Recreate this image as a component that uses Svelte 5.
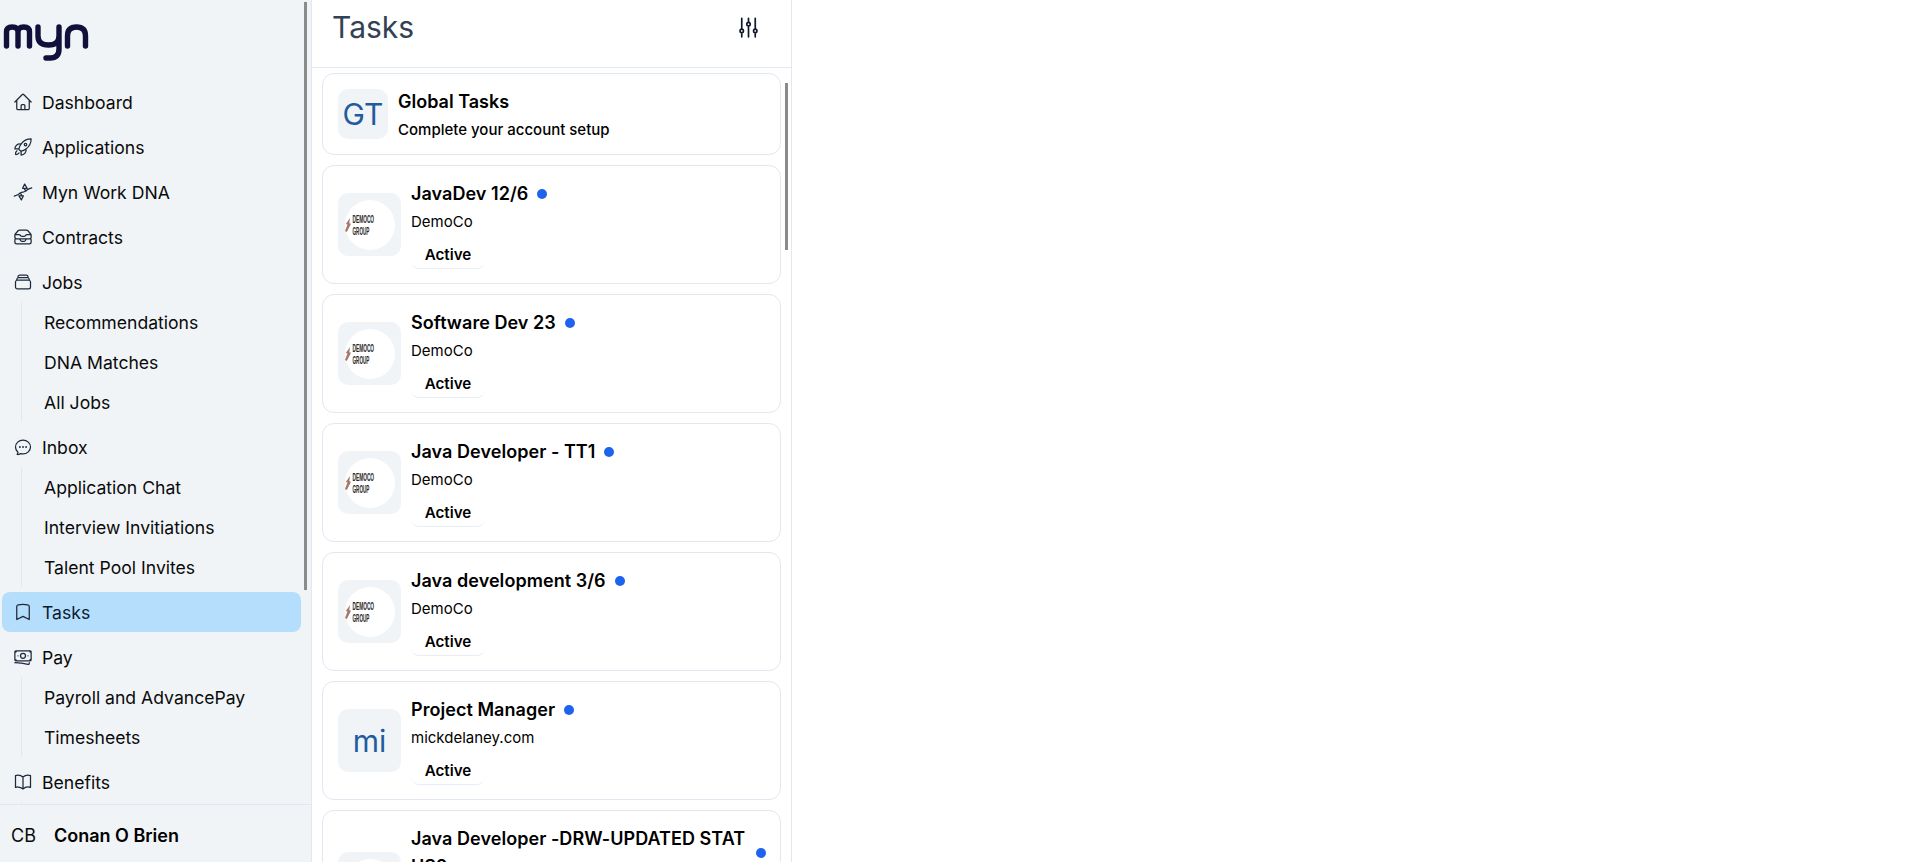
<script>
  const icons = {
    home: "m2.25 12 8.954-8.955c.44-.439 1.152-.439 1.591 0L21.75 12M4.5 9.75v10.125c0 .621.504 1.125 1.125 1.125H9.75v-4.875c0-.621.504-1.125 1.125-1.125h2.25c.621 0 1.125.504 1.125 1.125V21h4.125c.621 0 1.125-.504 1.125-1.125V9.75M8.25 21h8.25",
    rocket: "M15.59 14.37a6 6 0 0 1-5.84 7.38v-4.8m5.84-2.58a14.98 14.98 0 0 0 6.16-12.12A14.98 14.98 0 0 0 9.631 8.41m5.96 5.96a14.926 14.926 0 0 1-5.841 2.58m-.119-8.54a6 6 0 0 0-7.381 5.84h4.8m2.581-5.84a14.927 14.927 0 0 0-2.58 5.84m2.699 2.7c-.103.021-.207.041-.311.06a15.09 15.09 0 0 1-2.448-2.448 14.9 14.9 0 0 1 .06-.312m-2.24 2.39a4.493 4.493 0 0 0-1.757 4.306 4.493 4.493 0 0 0 4.306-1.758M16.5 9a1.5 1.5 0 1 1-3 0 1.5 1.5 0 0 1 3 0Z",
    dna: "M1.500 17C8 15.500 9 12 12 12s4-3.500 10.500-5M14 2.500l3 5h-5.500zM10 21.500 7 16.500h5.500zM8.500 13l2 3M13.500 8l2 3",
    inbox: "m7.875 14.25 1.214 1.942a2.25 2.25 0 0 0 1.908 1.058h2.006c.776 0 1.497-.4 1.908-1.058l1.214-1.942M2.41 9h4.636a2.25 2.25 0 0 1 1.872 1.002l.164.246a2.25 2.25 0 0 0 1.872 1.002h2.092a2.25 2.25 0 0 0 1.872-1.002l.164-.246A2.25 2.25 0 0 1 16.954 9h4.636M2.41 9a2.25 2.25 0 0 0-.16.832V12a2.25 2.25 0 0 0 2.25 2.25h15A2.25 2.25 0 0 0 21.75 12V9.832c0-.287-.055-.57-.16-.832M2.41 9a2.25 2.25 0 0 1 .382-.632l3.285-3.832a2.25 2.25 0 0 1 1.708-.786h8.43c.657 0 1.281.287 1.709.786l3.284 3.832c.163.19.291.404.382.632M4.5 20.25h15A2.25 2.25 0 0 0 21.75 18v-2.625c0-.621-.504-1.125-1.125-1.125H3.375c-.621 0-1.125.504-1.125 1.125V18a2.25 2.25 0 0 0 2.25 2.25Z",
    stack: "M6 6.878V6a2.25 2.25 0 0 1 2.25-2.25h7.5A2.25 2.25 0 0 1 18 6v.878m-12 0c.235-.083.487-.128.75-.128h10.5c.263 0 .515.045.75.128m-12 0A2.25 2.25 0 0 0 4.5 9v.878m13.5-3A2.25 2.25 0 0 1 19.5 9v.878m0 0a2.246 2.246 0 0 0-.75-.128H5.25c-.263 0-.515.045-.75.128m15 0A2.25 2.25 0 0 1 21 12v6a2.25 2.25 0 0 1-2.25 2.25H5.25A2.25 2.25 0 0 1 3 18v-6c0-.98.626-1.813 1.5-2.122",
    chat: "M8.625 12a.375.375 0 1 1-.75 0 .375.375 0 0 1 .75 0Zm0 0H8.25m4.125 0a.375.375 0 1 1-.75 0 .375.375 0 0 1 .75 0Zm0 0H12m4.125 0a.375.375 0 1 1-.75 0 .375.375 0 0 1 .75 0Zm0 0h-.375M21 12c0 4.556-4.03 8.25-9 8.25a9.764 9.764 0 0 1-2.555-.337A5.972 5.972 0 0 1 5.41 20.97a5.969 5.969 0 0 1-.474-.065 4.48 4.48 0 0 0 .978-2.025c.09-.457-.133-.901-.467-1.226C3.93 16.178 3 14.189 3 12c0-4.556 4.03-8.25 9-8.25s9 3.694 9 8.25Z",
    bookmark: "M17.593 3.322c1.1.128 1.907 1.077 1.907 2.185V21L12 17.25 4.5 21V5.507c0-1.108.806-2.057 1.907-2.185a48.507 48.507 0 0 1 11.186 0Z",
    notes: "M2.25 18.75a60.07 60.07 0 0 1 15.797 2.101c.727.198 1.453-.342 1.453-1.096V18.75M3.75 4.5v.75A.75.75 0 0 1 3 6h-.75m0 0v-.375c0-.621.504-1.125 1.125-1.125H20.25M2.25 6v9m18-10.5v.75c0 .414.336.75.75.75h.75m-1.5-1.5h.375c.621 0 1.125.504 1.125 1.125v9.75c0 .621-.504 1.125-1.125 1.125h-.375m1.5-1.5H21a.75.75 0 0 0-.75.75v.75m0 0H3.75m0 0h-.375a1.125 1.125 0 0 1-1.125-1.125V15m1.5 1.5v-.75A.75.75 0 0 0 3 15h-.75M15 10.5a3 3 0 1 1-6 0 3 3 0 0 1 6 0Zm3 0h.008v.008H18V10.5Zm-12 0h.008v.008H6V10.5Z",
    book: "M12 6.042A8.967 8.967 0 0 0 6 3.75c-1.052 0-2.062.18-3 .512v14.25A8.987 8.987 0 0 1 6 18c2.305 0 4.408.867 6 2.292m0-14.25a8.966 8.966 0 0 1 6-2.292c1.052 0 2.062.18 3 .512v14.25A8.987 8.987 0 0 0 18 18a8.967 8.967 0 0 0-6 2.292m0-14.25v14.25"
  };

  const nav = [
    { label: "Dashboard", icon: "home" },
    { label: "Applications", icon: "rocket" },
    { label: "Myn Work DNA", icon: "dna" },
    { label: "Contracts", icon: "inbox" },
    { label: "Jobs", icon: "stack", sub: ["Recommendations", "DNA Matches", "All Jobs"] },
    { label: "Inbox", icon: "chat", sub: ["Application Chat", "Interview Invitiations", "Talent Pool Invites"] },
    { label: "Tasks", icon: "bookmark", active: true },
    { label: "Pay", icon: "notes", sub: ["Payroll and AdvancePay", "Timesheets"] },
    { label: "Benefits", icon: "book", sub: [""] }
  ];

  const tasks = [
    { title: "JavaDev 12/6", company: "DemoCo", logo: true },
    { title: "Software Dev 23", company: "DemoCo", logo: true },
    { title: "Java Developer - TT1", company: "DemoCo", logo: true },
    { title: "Java development 3/6", company: "DemoCo", logo: true },
    { title: "Project Manager", company: "mickdelaney.com", initials: "mi" },
    { title: "Java Developer -DRW-UPDATED STATUS2", company: "DemoCo", logo: true }
  ];
</script>

<div class="page">
  <aside class="sidebar">
    <div class="brand">
      <svg class="logo" width="92" height="42" viewBox="0 0 92 42" fill="none" stroke="#10103a" stroke-width="5.4" stroke-linecap="round" stroke-linejoin="round" aria-label="myn">
        <path d="M6.500 25V11Q6.500 6 12.200 6Q18 6 18 11V25M18 11Q18 6 23.800 6Q29.500 6 29.500 11V25" />
        <path d="M38 6V15Q38 24 48.500 24Q59 24 59 15V6M59 15V28Q59 37 50 37H46" />
        <path d="M67.500 25V15Q67.500 6 76.500 6Q85.500 6 85.500 15V25" />
      </svg>
    </div>
    <nav class="nav">
      {#each nav as item}
        <div class="row" class:active={item.active}>
          <svg class="icon" viewBox="0 0 24 24" fill="none" stroke="currentColor" stroke-width="1.5" stroke-linecap="round" stroke-linejoin="round"><path d={icons[item.icon]} /></svg>
          <span>{item.label}</span>
        </div>
        {#if item.sub}
          <div class="sub">
            {#each item.sub as s}
              <div class="subrow">{s}</div>
            {/each}
          </div>
        {/if}
      {/each}
    </nav>
    <div class="footer">
      <span class="initials">CB</span>
      <span class="name">Conan O Brien</span>
    </div>
    <div class="scrollbar side"></div>
  </aside>

  <section class="panel">
    <header class="head">
      <h1>Tasks</h1>
      <svg class="filter" viewBox="0 0 24 24" fill="none" stroke="#0f172a" stroke-width="1.5" stroke-linecap="round" stroke-linejoin="round"><path d="M6 13.500V3.750m0 9.750a1.500 1.500 0 0 1 0 3m0-3a1.500 1.500 0 0 0 0 3m0 3.750V16.500m12-3V3.750m0 9.750a1.500 1.500 0 0 1 0 3m0-3a1.500 1.500 0 0 0 0 3m0 3.750V16.500m-6-9V3.750m0 3.750a1.500 1.500 0 0 1 0 3m0-3a1.500 1.500 0 0 0 0 3m0 9.750V10.500" /></svg>
    </header>
    <div class="list">
      <article class="card global">
        <div class="avatar small">GT</div>
        <div class="info">
          <div class="gtitle">Global Tasks</div>
          <div class="gsub">Complete your account setup</div>
        </div>
      </article>
      {#each tasks as t}
        <article class="card">
          <div class="avatar">
            {#if t.logo}
              <svg width="50" height="50" viewBox="0 0 50 50">
                <circle cx="25" cy="25" r="25" fill="#fff" />
                <path d="M0 31 2.500 24.500 0.800 24 5 18 4.300 23.200 6 23.800 1.800 32Z" fill="#a9776a" />
                <text transform="translate(7.500 23) scale(0.800 1.850)" class="dem">DEMOCO</text>
                <text transform="translate(7.500 35) scale(0.770 1.850)" class="dem">GROUP</text>
              </svg>
            {:else}
              {t.initials}
            {/if}
          </div>
          <div class="info">
            <div class="title-line">
              <span class="title">{t.title}</span>
              <span class="dot"></span>
            </div>
            <div class="company">{t.company}</div>
            <div class="badge">Active</div>
          </div>
        </article>
      {/each}
    </div>
    <div class="scrollbar list-bar"></div>
  </section>
</div>

<style>
  :global(html), :global(body) {
    margin: 0;
    height: 100%;
    overflow: hidden;
    background: #fff;
  }
  .page {
    display: flex;
    height: 862px;
    font-family: Inter, "Liberation Sans", sans-serif;
    color: #0a0a0a;
    overflow: hidden;
  }
  .sidebar {
    position: relative;
    width: 311px;
    flex: none;
    display: flex;
    flex-direction: column;
    background: #f0f4f7;
    border-right: 1px solid #e2e8f0;
    overflow: hidden;
  }
  .brand {
    height: 82px;
    flex: none;
    padding: 21px 0 0 0;
    box-sizing: border-box;
  }
  .logo { display: block; }
  .nav {
    flex: 1;
    min-height: 0;
    overflow: hidden;
    display: flex;
    flex-direction: column;
    gap: 5px;
  }
  .row {
    flex: none;
    height: 40px;
    margin: 0 10px 0 2px;
    padding-left: 10.500px;
    display: flex;
    align-items: center;
    gap: 9.500px;
    font-size: 17.600px;
    border-radius: 8px;
  }
  .row.active {
    background: #b5defd;
    color: #0b1b33;
  }
  .icon { width: 20px; height: 20px; flex: none; color: #1e293b; }
  .sub {
    flex: none;
    margin-left: 21px;
    border-left: 1px solid #e2e8f0;
    margin-top: -5px;
  }
  .subrow {
    height: 40px;
    line-height: 42px;
    padding-left: 22px;
    font-size: 17.600px;
  }
  .footer {
    flex: none;
    height: 58px;
    box-sizing: border-box;
    border-top: 1px solid #e2e8f0;
    display: flex;
    align-items: center;
    gap: 18px;
    padding: 4px 0 0 11px;
    font-size: 18px;
  }
  .name { font-weight: 600; color: #000; }
  .scrollbar {
    position: absolute;
    width: 3px;
    background: #8b8b8b;
  }
  .side { left: 304px; top: 2px; height: 588px; }
  .panel {
    position: relative;
    width: 480px;
    flex: none;
    display: flex;
    flex-direction: column;
    border-right: 1.500px solid #e2e8f0;
    overflow: hidden;
    box-sizing: border-box;
  }
  .head {
    flex: none;
    height: 68px;
    box-sizing: border-box;
    border-bottom: 1px solid #e2e8f0;
    display: flex;
    align-items: flex-start;
    justify-content: space-between;
    padding: 0 29px 0 20px;
  }
  h1 {
    margin: 0;
    font-size: 30px;
    font-weight: 400;
    line-height: 55px;
    color: #334155;
  }
  .filter { width: 27px; height: 27px; margin-top: 14px; }
  .list {
    flex: 1;
    min-height: 0;
    overflow: hidden;
    padding: 5px 10px 0;
    display: flex;
    flex-direction: column;
    gap: 10px;
  }
  .card {
    flex: none;
    width: 459px;
    box-sizing: border-box;
    border: 1px solid #e2e8f0;
    border-radius: 12px;
    padding: 14px 15px;
    display: flex;
    align-items: center;
    gap: 10px;
    background: #fff;
  }
  .card.global { padding: 15px 15px 13px; align-items: flex-start; }
  .avatar {
    width: 63px;
    height: 63px;
    flex: none;
    border-radius: 10px;
    background: #f0f4f7;
    display: flex;
    align-items: center;
    justify-content: center;
    font-size: 30px;
    color: #1f5c9e;
  }
  .avatar.small { width: 50px; height: 50px; }
  .dem {
    font-family: "Liberation Sans", sans-serif;
    font-size: 6px;
    font-weight: 700;
    fill: #262626;
  }
  .info { min-width: 0; flex: 1; color: #000; }
  .gtitle {
    font-size: 18px;
    font-weight: 600;
    line-height: 26px;
  }
  .gsub {
    font-size: 15px;
    font-weight: 500;
    line-height: 22px;
    margin-top: 4px;
  }
  .title-line {
    display: flex;
    align-items: center;
    gap: 9px;
    width: 355px;
  }
  .title {
    font-size: 18px;
    font-weight: 600;
    line-height: 28px;
    letter-spacing: 0.050px;
    word-break: break-all;
  }
  .dot {
    flex: none;
    width: 10px;
    height: 10px;
    border-radius: 50%;
    background: #1d63ed;
  }
  .company {
    font-size: 15px;
    line-height: 28px;
  }
  .badge {
    width: 74px;
    height: 33px;
    box-sizing: border-box;
    padding-top: 6px;
    text-align: center;
    line-height: 26px;
    font-size: 15.200px;
    font-weight: 600;
    border-radius: 8px;
    border-bottom: 1px solid #e9eef4;
    background: #fff;
  }
  .list-bar { left: 473px; top: 83px; height: 167px; }
</style>
